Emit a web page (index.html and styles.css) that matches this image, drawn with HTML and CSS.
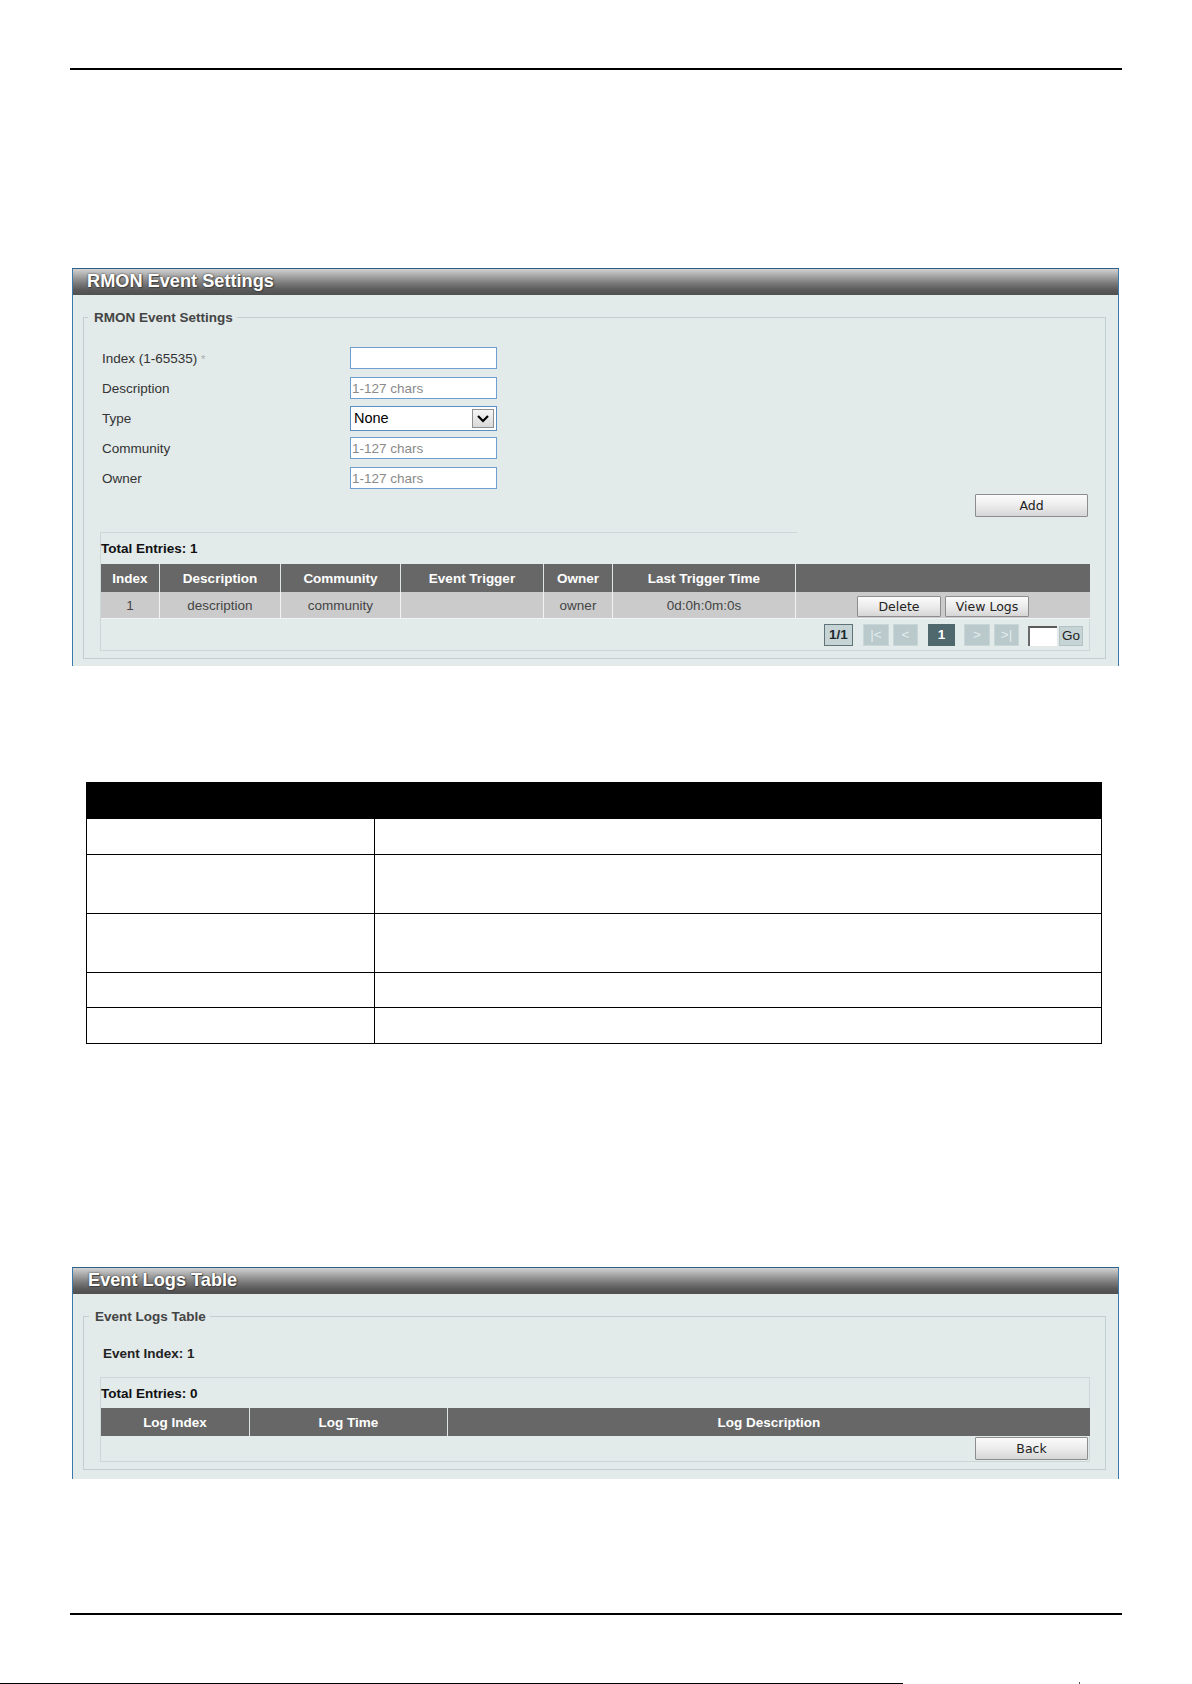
FILE: index.html
```html
<!doctype html>
<html>
<head>
<meta charset="UTF-8">
<title>RMON Event Settings</title>
<link rel="stylesheet" href="styles.css">
</head>
<body>
	<div class="rule"></div>

	<div class="panel panel-settings">
		<div class="panel-head">RMON Event Settings</div>
		<fieldset class="group group-settings">
			<legend>RMON Event Settings</legend>
			<div class="form">
				<label>Index (1-65535) <span class="req">*</span></label>
				<input type="text" class="field">
				<label>Description</label>
				<input type="text" class="field" placeholder="1-127 chars">
				<label>Type</label>
				<div class="select">
					<span class="select-value">None</span>
					<span class="select-arrow"><svg width="20" height="17" viewBox="0 0 20 17"><path d="M5 6 L10 11 L15 6" fill="none" stroke="#000" stroke-width="2.2"/></svg></span>
				</div>
				<label>Community</label>
				<input type="text" class="field" placeholder="1-127 chars">
				<label>Owner</label>
				<input type="text" class="field" placeholder="1-127 chars">
			</div>
			<div class="actions"><button type="button" class="btn btn-wide">Add</button></div>

			<div class="entries">
				<div class="entries-title">Total Entries: 1</div>
				<table class="grid">
					<tr>
						<th class="c-index">Index</th>
						<th class="c-desc">Description</th>
						<th class="c-comm">Community</th>
						<th class="c-trig">Event Trigger</th>
						<th class="c-owner">Owner</th>
						<th class="c-time">Last Trigger Time</th>
						<th></th>
					</tr>
					<tr>
						<td>1</td>
						<td>description</td>
						<td>community</td>
						<td></td>
						<td>owner</td>
						<td>0d:0h:0m:0s</td>
						<td class="cell-actions">
							<button type="button" class="btn btn-row">Delete</button>
							<button type="button" class="btn btn-row">View Logs</button>
						</td>
					</tr>
				</table>
				<div class="pager">
					<span class="pg pg-count">1/1</span>
					<span class="pg pg-off pg-first">|&lt;</span>
					<span class="pg pg-off">&lt;</span>
					<span class="pg pg-cur">1</span>
					<span class="pg pg-off pg-next">&gt;</span>
					<span class="pg pg-off">&gt;|</span>
					<input type="text" class="pg-input">
					<span class="pg pg-go">Go</span>
				</div>
			</div>
		</fieldset>
	</div>

	<table class="desc">
		<tr class="desc-head"><th class="desc-key"></th><th></th></tr>
		<tr class="r1"><td></td><td></td></tr>
		<tr class="r2"><td></td><td></td></tr>
		<tr class="r2"><td></td><td></td></tr>
		<tr class="r3"><td></td><td></td></tr>
		<tr class="r1"><td></td><td></td></tr>
	</table>

	<div class="panel panel-logs">
		<div class="panel-head">Event Logs Table</div>
		<fieldset class="group group-logs">
			<legend>Event Logs Table</legend>
			<div class="event-index">Event Index: 1</div>
			<div class="entries entries-logs">
				<div class="entries-title entries-title-full">Total Entries: 0</div>
				<table class="grid">
					<tr>
						<th class="l-index">Log Index</th>
						<th class="l-time">Log Time</th>
						<th>Log Description</th>
					</tr>
				</table>
				<div class="back-row"><button type="button" class="btn btn-wide">Back</button></div>
			</div>
		</fieldset>
	</div>

	<div class="rule rule-bottom"></div>
	<div class="footer">
		<div class="foot-line"></div>
		<div class="foot-tick"></div>
	</div>
</body>
</html>
```

FILE: styles.css
```css
html {
	overflow:hidden;
	}

body {
	margin:0;
	font-family:"Liberation Sans", Arial, Helvetica, sans-serif;
	font-size:13.5px;
	color:#333;
	background:#fff;
	}

.rule {
	height:2px;
	margin:68px 70px 0 70px;
	background:#000;
	}

.rule-bottom {
	margin-top:134px;
	}

/* boxed panels with the grey title bar */
.panel {
	box-sizing:border-box;
	width:1047px;
	margin-left:72px;
	border-top:1px solid #2d5f88;
	border-left:1px solid #3b78ad;
	border-right:1px solid #3b78ad;
	background:#e2eaea;
	}

.panel-settings {
	margin-top:198px;
	height:398px;
	}

.panel-logs {
	margin-top:223px;
	height:212px;
	}

.panel-head {
	height:26px;
	padding-left:14px;
	line-height:25px;
	font-size:18.2px;
	font-weight:bold;
	color:#fff;
	text-shadow:0 0 2px #333, 1px 1px 1px #444;
	background:linear-gradient(to bottom, #d2d2d2 0%, #a9a9a9 25%, #7a7a7a 55%, #5a5a5a 80%, #4f4f4f 100%);
	}

.panel-logs .panel-head {
	padding-left:15px;
	}

.group {
	margin:15px 12px 0 10px;
	padding:0 0 7px 0;
	border:1px solid #c2cfd0;
	}

.group legend {
	margin-left:4px;
	padding:0 4px 0 6px;
	font-weight:bold;
	color:#444;
	line-height:15px;
	}

.group-logs legend {
	margin-left:5px;
	}

/* settings form */
.form {
	display:grid;
	grid-template-columns:248px 147px;
	grid-auto-rows:30px;
	align-items:center;
	padding:18px 0 0 18px;
	}

.form label {
	color:#333;
	}

.req {
	color:#aaa;
	font-size:11px;
	}

.field {
	box-sizing:border-box;
	width:147px;
	height:22px;
	margin:0;
	padding:0 2px 0 1px;
	border:1px solid #6f9fd0;
	font-family:"Liberation Sans", Arial, sans-serif;
	font-size:13.5px;
	background:#fff;
	}

.field::placeholder {
	color:#8a8a8a;
	}

.select {
	box-sizing:border-box;
	display:flex;
	align-items:center;
	justify-content:space-between;
	width:147px;
	height:25px;
	padding:0 2px 0 3px;
	border:1px solid #5b8fc4;
	background:#fff;
	}

.select-value {
	font-size:14.5px;
	color:#000;
	}

.select-arrow {
	box-sizing:border-box;
	display:flex;
	width:22px;
	height:19px;
	border:1px solid #8f8f8f;
	background:linear-gradient(to bottom, #f6f6f6, #d9d9d9);
	}

.actions {
	display:flex;
	justify-content:flex-end;
	padding:1px 17px 0 0;
	}

.btn {
	box-sizing:border-box;
	margin:0;
	padding:0;
	border:1px solid #8d8d8d;
	border-radius:1px;
	font-family:"DejaVu Sans", Verdana, sans-serif;
	font-size:12.5px;
	color:#222;
	background:linear-gradient(to bottom, #fbfbfb 0%, #ececec 50%, #d6d6d6 100%);
	}

.btn-wide {
	width:113px;
	height:23px;
	}

.btn-row {
	width:84px;
	height:21px;
	margin:2px 2px 0 2px;
	}

/* total entries box and tables */
.entries {
	margin:15px 15px 0 16px;
	border-left:1px solid #cdd7d8;
	border-bottom:1px solid #cdd7d8;
	}

.entries-title {
	width:696px;
	height:31px;
	line-height:31px;
	border-top:1px solid #cdd7d8;
	font-weight:bold;
	color:#111;
	}

.entries-title-full {
	width:auto;
	height:30px;
	line-height:31px;
	border-right:1px solid #cdd7d8;
	}

.grid {
	width:100%;
	border-collapse:collapse;
	table-layout:fixed;
	}

.grid th {
	height:28px;
	padding:0;
	background:#676767;
	color:#fff;
	font-weight:bold;
	border-left:1px solid #dfe5e5;
	}

.grid td {
	height:26px;
	padding:0;
	text-align:center;
	background:#cbcbcb;
	color:#444;
	border-left:1px solid #f2f4f4;
	border-bottom:1px solid #f2f4f4;
	}

.grid tr th:first-child, .grid tr td:first-child {
	border-left:none;
	}

.c-index { width:58px; }
.c-desc { width:120px; }
.c-comm { width:119px; }
.c-trig { width:142px; }
.c-owner { width:68px; }
.c-time { width:182px; }

.l-index { width:148px; }
.l-time { width:197px; }

.cell-actions {
	font-size:0;
	}

.pager {
	display:flex;
	align-items:center;
	justify-content:flex-end;
	height:31px;
	padding-right:6px;
	border-right:1px solid #cdd7d8;
	}

.pg {
	box-sizing:border-box;
	display:flex;
	align-items:center;
	justify-content:center;
	height:22px;
	font-size:13.5px;
	font-weight:bold;
	}

.pg-count {
	width:29px;
	margin-right:10px;
	border:1px solid #5f7378;
	background:#c6d4d6;
	color:#1d2a2e;
	}

.pg-off {
	width:25px;
	margin-right:4px;
	border:1px solid #c9d6d8;
	background:#b9c9cc;
	color:#e4eded;
	font-weight:normal;
	}

.pg-first {
	width:26px;
	}

.pg-next {
	width:26px;
	}

.pg-cur {
	width:27px;
	margin:0 9px 0 6px;
	background:#4e686e;
	color:#fff;
	}

.pg-input {
	box-sizing:border-box;
	width:29px;
	height:20px;
	margin:2px 2px 0 5px;
	padding:0;
	border:none;
	border-top:2px solid #5a5a5a;
	border-left:2px solid #6a6a6a;
	background:#fff;
	}

.pg-go {
	width:24px;
	height:20px;
	margin-top:2px;
	border:1px solid #b3c2c5;
	background:#c7d4d6;
	color:#222;
	font-weight:normal;
	}

.back-row {
	display:flex;
	justify-content:flex-end;
	height:25px;
	align-items:center;
	padding-right:1px;
	border-right:1px solid #cdd7d8;
	}

.event-index {
	height:20px;
	margin:20px 0 0 19px;
	line-height:20px;
	font-weight:bold;
	color:#222;
	}

.entries-logs {
	margin-top:13px;
	}

/* parameter description table */
.desc {
	width:1016px;
	margin:116px 0 0 86px;
	border-collapse:collapse;
	}

.desc th, .desc td {
	padding:0;
	border:1px solid #000;
	}

.desc-head th {
	height:35px;
	background:#000;
	}

.desc-key {
	width:287px;
	}

.desc .r1 td {
	height:35px;
	}

.desc .r2 td {
	height:58px;
	}

.desc .r3 td {
	height:34px;
	}

.footer {
	display:flex;
	align-items:flex-end;
	height:2px;
	margin-top:67px;
	}

.foot-line {
	width:903px;
	height:1px;
	background:#000;
	}

.foot-tick {
	width:1px;
	height:2px;
	margin-left:176px;
	background:#555;
	}
```
